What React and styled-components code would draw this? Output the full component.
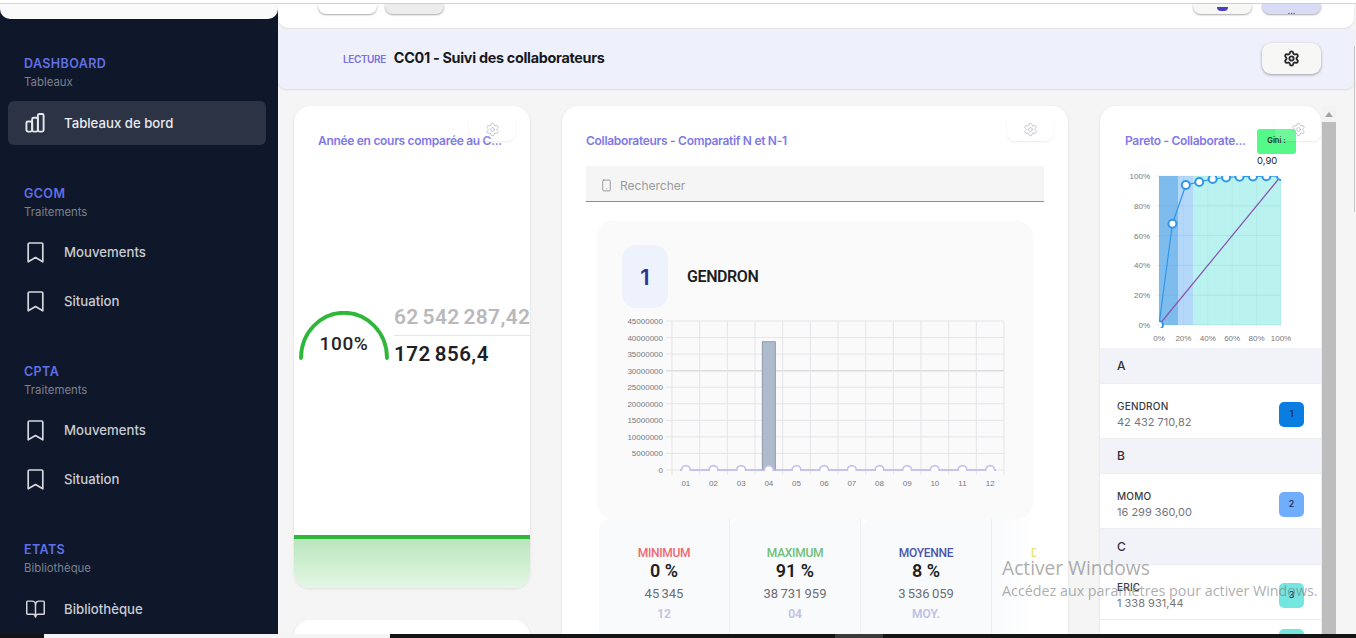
import React from 'react';
import styled, { createGlobalStyle } from 'styled-components';
import { Settings, BookOpen, Smartphone } from 'lucide-react';

const GlobalStyle = createGlobalStyle`
  html, body {
    margin: 0;
    padding: 0;
    height: 100%;
    overflow: hidden;
    background: #f5f5f6;
    font-family: "Inter", "Liberation Sans", sans-serif;
  }
  * { box-sizing: border-box; }
`;

const Screen = styled.div`
  position: relative;
  display: flex;
  flex-direction: column;
  width: 1356px;
  height: 638px;
  overflow: hidden;
  background: #f5f5f6;
`;

const TopEdge = styled.div`
  flex: none;
  height: 4px;
  background: #fff;
  border-bottom: 1px solid #d4d4d6;
`;

const Body = styled.div`
  flex: 1;
  min-height: 0;
  display: flex;
`;

const Sidebar = styled.aside`
  flex: none;
  width: 278px;
  background: #0f172a;
  overflow: hidden;
`;

const SidebarLogo = styled.div`
  height: 15px;
  background: #fafafa;
  border-radius: 0 0 10px 10px;
  margin-bottom: 37px;
`;

const MenuGroup = styled.div`
  margin-bottom: ${(p) => p.$gap}px;
`;

const GroupTitle = styled.div`
  padding-left: 24px;
  color: #6170e6;
  font-size: 12.5px;
  font-weight: 600;
  letter-spacing: 0.4px;
  line-height: 16px;
`;

const GroupSub = styled.div`
  padding-left: 24px;
  margin-top: 3px;
  color: #7b818e;
  font-size: 11.4px;
  line-height: 14px;
  margin-bottom: ${(p) => p.$after}px;
`;

const MenuItem = styled.div`
  display: flex;
  align-items: center;
  gap: 18px;
  height: 44px;
  margin: 0 12px 5px 8px;
  padding-left: 17px;
  border-radius: 6px;
  background: ${(p) => (p.$active ? '#2c3345' : 'transparent')};
  color: ${(p) => (p.$active ? '#e9eaee' : '#c9ccd2')};
  font-size: 13.2px;
  font-weight: 500;
`;

const MenuIcon = styled.span`
  display: flex;
  width: 21px;
  justify-content: center;
  color: #d5d7dc;
`;

const Main = styled.main`
  flex: 1;
  min-width: 0;
  display: flex;
  flex-direction: column;
`;

const TopBar = styled.div`
  flex: none;
  display: flex;
  justify-content: space-between;
  height: 24px;
  padding: 0 33px 0 40px;
  background: #fff;
  border-radius: 0 0 10px 10px;
  box-shadow: 0 1px 2px rgba(0, 0, 0, 0.1);
  margin-right: 2px;
`;

const ButtonRow = styled.div`
  display: flex;
  gap: ${(p) => p.$gap}px;
`;

const ClippedButton = styled.div`
  display: flex;
  align-items: flex-end;
  justify-content: center;
  width: 59px;
  height: 10px;
  background: ${(p) => p.$bg};
  border-radius: 0 0 8px 8px;
  box-shadow: 0 1px 2px rgba(0, 0, 0, 0.35);
  overflow: hidden;
  color: #4b3fc4;
  font-size: 9px;
  line-height: 7px;
`;

const Dot = styled.span`
  display: block;
  width: 11px;
  height: 4px;
  margin-bottom: 3px;
  border-radius: 0 0 6px 6px;
  background: #4b3fc4;
`;

const TitleBand = styled.div`
  flex: none;
  display: flex;
  align-items: center;
  justify-content: space-between;
  height: 60px;
  margin-top: 1px;
  margin-right: 2px;
  padding: 0 33px 2px 65px;
  background: #eef1fc;
  border-radius: 0 0 8px 8px;
  box-shadow: 0 1px 2px rgba(0, 0, 0, 0.1);
`;

const TitleGroup = styled.div`
  display: flex;
  align-items: baseline;
  gap: 8px;
  margin-bottom: 2px;
`;

const TitleTag = styled.span`
  color: #7c6fe0;
  font-size: 10px;
  font-weight: 600;
  letter-spacing: -0.4px;
`;

const PageTitle = styled.h1`
  margin: 0;
  color: #17181c;
  font-size: 14.4px;
  font-weight: 700;
  letter-spacing: -0.3px;
`;

const GearButton = styled.div`
  display: flex;
  align-items: center;
  justify-content: center;
  width: 59px;
  height: 31px;
  background: #f7f7f5;
  border-radius: 9px;
  box-shadow: 0 1px 3px rgba(0, 0, 0, 0.35);
  color: #26272b;
`;

const Content = styled.div`
  flex: 1;
  min-height: 0;
  display: flex;
  align-items: flex-start;
  padding: 17px 0 0 16px;
  overflow: hidden;
`;

const Column = styled.div`
  flex: none;
  display: flex;
  flex-direction: column;
  gap: 32px;
  width: ${(p) => p.$width}px;
  margin-right: ${(p) => p.$after}px;
`;

const Card = styled.section`
  position: relative;
  flex: none;
  height: ${(p) => p.$height}px;
  background: #fff;
  border-radius: 16px;
  box-shadow: 0 1px 3px rgba(0, 0, 0, 0.1);
  overflow: hidden;
`;

const CardTitle = styled.h2`
  margin: 0;
  padding: 27px 24px 0 ${(p) => p.$left || 24}px;
  color: #8179ea;
  font-size: 12px;
  font-weight: 600;
  line-height: 16px;
  letter-spacing: -0.3px;
  white-space: nowrap;
`;

const CardGear = styled.div`
  position: absolute;
  top: 12px;
  right: ${(p) => p.$right}px;
  display: flex;
  align-items: center;
  justify-content: center;
  width: 46px;
  height: 23px;
  padding-bottom: 1px;
  background: rgba(255, 255, 255, 0.14);
  border-radius: 0 0 8px 8px;
  box-shadow: 0 1px 2px rgba(0, 0, 0, 0.08);
  color: #b9bbcc;
`;

const KpiBody = styled.div`
  display: flex;
  align-items: flex-start;
  padding: 149px 0 0 4px;
`;

const Gauge = styled.div`
  position: relative;
  flex: none;
  width: 92px;
  height: 52px;
  margin: 13px 4px 0 0;
`;

const GaugeValue = styled.span`
  position: absolute;
  left: 0;
  right: 0;
  top: 21px;
  text-align: center;
  color: #24252a;
  font-family: "Roboto", "Liberation Sans", sans-serif;
  font-size: 19px;
  font-weight: 500;
  letter-spacing: 0.6px;
`;

const KpiValues = styled.div`
  flex: 1;
  min-width: 0;
  white-space: nowrap;
  font-family: "Roboto", "Liberation Sans", sans-serif;
`;

const KpiTop = styled.div`
  height: 38px;
  padding-top: 5px;
  color: #b9b9bb;
  font-size: 21px;
  font-weight: 600;
  line-height: 28px;
  letter-spacing: 0.3px;
  word-spacing: -1.5px;
  border-bottom: 1px solid #e6e6e8;
`;

const KpiBottom = styled.div`
  padding-top: 4px;
  color: #1e1f24;
  font-size: 20.5px;
  font-weight: 600;
  line-height: 28px;
  letter-spacing: 0.5px;
  word-spacing: -1.5px;
`;

const KpiFooter = styled.div`
  position: absolute;
  left: 0;
  right: 0;
  bottom: 0;
  height: 53px;
  border-top: 4px solid #2fb73a;
  background: linear-gradient(#b9e6bc, #e4f7e4);
`;

const SearchBox = styled.div`
  display: flex;
  align-items: center;
  gap: 7px;
  height: 36px;
  margin: 17px 24px 0;
  padding: 4px 0 0 14px;
  background: #f5f5f5;
  border-bottom: 1px solid #8d8d8f;
  color: #9a9a9c;
  font-size: 12px;
`;

const PersonCard = styled.div`
  width: 436px;
  height: 298px;
  margin: 19px 0 0 35px;
  padding: 24px 25px 0;
  background: #fafafb;
  border-radius: 18px;
  box-shadow: 0 0 2px rgba(0, 0, 0, 0.05);
`;

const PersonHead = styled.div`
  display: flex;
  align-items: center;
  gap: 19px;
  margin-bottom: 7px;
`;

const RankTile = styled.div`
  display: flex;
  align-items: center;
  justify-content: center;
  width: 46px;
  height: 63px;
  background: #eef2fd;
  border-radius: 14px;
  color: #2f3396;
  font-size: 22px;
  font-weight: 600;
`;

const PersonName = styled.div`
  color: #1d1e22;
  font-size: 16px;
  font-weight: 600;
  letter-spacing: -0.4px;
  font-family: "Roboto", "Liberation Sans", sans-serif;
`;

const StatsRow = styled.div`
  display: flex;
  margin: 0 0 0 37px;
`;

const Stat = styled.div`
  flex: none;
  width: 131px;
  height: 118px;
  padding-top: 27px;
  text-align: center;
  background: #f9fafc;
  border-radius: 10px 0 0 0;
  border-right: 1px solid #eeeff2;
  font-family: "Roboto", "Liberation Sans", sans-serif;
`;

const ClippedStat = styled.div`
  flex: none;
  width: 44px;
  height: 118px;
  padding: 27px 0 0 39px;
  overflow: hidden;
  background: linear-gradient(90deg, #f9fafc, #fff);
  font-family: "Roboto", "Liberation Sans", sans-serif;
`;

const StatLabel = styled.div`
  color: ${(p) => p.$color};
  font-size: 12px;
  font-weight: 500;
  line-height: 14px;
  letter-spacing: -0.3px;
`;

const StatPercent = styled.div`
  color: #1e1f24;
  font-size: 18px;
  font-weight: 600;
  line-height: 22px;
`;

const StatAmount = styled.div`
  margin-top: 3px;
  color: #6d6e72;
  font-size: 13px;
  line-height: 18px;
  word-spacing: -1px;
`;

const StatPeriod = styled.div`
  margin-top: 2px;
  color: #c0c1e4;
  font-size: 12px;
  font-weight: 600;
  line-height: 18px;
`;

const GiniBadge = styled.div`
  position: absolute;
  top: 23px;
  left: 157px;
  display: flex;
  align-items: center;
  justify-content: center;
  width: 39px;
  height: 25px;
  padding-bottom: 2px;
  background: #55f98a;
  border-radius: 3px;
  color: #17321f;
  font-size: 7.5px;
  font-weight: 600;
`;

const GiniValue = styled.div`
  position: absolute;
  top: 49px;
  left: 157px;
  color: #26272b;
  font-size: 9.5px;
`;

const ParetoChart = styled.div`
  height: 199px;
  padding-top: 21px;
`;

const LetterRow = styled.div`
  display: flex;
  align-items: center;
  height: 34.5px;
  padding-left: 17px;
  background: #f1f3f9;
  color: #303138;
  font-size: 12px;
  font-weight: 500;
`;

const PersonRow = styled.div`
  display: flex;
  align-items: center;
  justify-content: space-between;
  height: 56px;
  padding: 7px 17px 0;
  border-bottom: 1px solid #eceef2;
  border-top: 1px solid #eceef2;
`;

const TrailingRow = styled.div`
  display: flex;
  justify-content: flex-end;
  padding: 9px 17px 0;
`;

const RowName = styled.div`
  color: #3a3b44;
  font-size: 10px;
  font-weight: 500;
  line-height: 16px;
  letter-spacing: 0.2px;
`;

const RowAmount = styled.div`
  color: #75767c;
  font-size: 11px;
  line-height: 17px;
`;

const RankChip = styled.div`
  display: flex;
  align-items: center;
  justify-content: center;
  width: 25px;
  height: 25px;
  padding-bottom: 2px;
  border-radius: 5px;
  background: ${(p) => p.$bg};
  color: #1e2a4a;
  font-size: 9px;
  font-weight: 500;
`;

const PanelScrollbar = styled.div`
  position: absolute;
  top: 105px;
  left: 1322px;
  width: 14px;
  height: 529px;
  padding-top: 17px;
  background: #f3f3f4;
`;

const ScrollArrow = styled.div`
  position: absolute;
  top: 7px;
  left: 3px;
  width: 0;
  height: 0;
  border-left: 4px solid transparent;
  border-right: 4px solid transparent;
  border-bottom: 5px solid #a3a3a3;
`;

const ScrollThumb = styled.div`
  height: 100%;
  background: #bdbdbd;
`;

const PageScrollbar = styled.div`
  position: absolute;
  top: 46px;
  right: 1px;
  width: 1px;
  height: 166px;
  background: #c8c8c8;
`;

const Watermark = styled.div`
  position: absolute;
  left: 1002px;
  top: 555px;
  color: rgba(120, 120, 120, 0.62);
  font-family: "Open Sans", "Liberation Sans", sans-serif;
  white-space: nowrap;
  pointer-events: none;
`;

const WatermarkTitle = styled.div`
  font-size: 19.2px;
  line-height: 26px;
`;

const WatermarkText = styled.div`
  font-size: 14.3px;
  line-height: 20px;
`;

const Taskbar = styled.div`
  flex: none;
  display: flex;
  height: 4px;
  background: #141414;
`;

const TaskSegment = styled.div`
  flex: none;
  width: ${(p) => p.$width}px;
  background: ${(p) => p.$bg};
`;

function ColumnsIcon() {
  return (
    <svg width="22" height="22" viewBox="0 0 22 22" fill="none" stroke="#e6e7eb" strokeWidth="2" strokeLinejoin="round">
      <rect x="1.5" y="9.5" width="6" height="10.5" rx="1.6" />
      <rect x="7.5" y="5.5" width="6" height="14.5" rx="1.6" />
      <rect x="13.5" y="1.5" width="6" height="18.5" rx="1.6" />
    </svg>
  );
}

function BookmarkIcon() {
  return (
    <svg width="17" height="21" viewBox="0 0 17 21" fill="none" stroke="currentColor" strokeWidth="1.7" strokeLinejoin="round">
      <path d="M1.2 2.2a1.2 1.2 0 0 1 1.2-1.2h12.2a1.2 1.2 0 0 1 1.2 1.2v17.6l-7.3-4.3-7.3 4.3z" />
    </svg>
  );
}

function GaugeArc() {
  return (
    <svg width="92" height="52" viewBox="0 0 92 52" fill="none">
      <path d="M3 47 A42.75 45 0 0 1 89 47" stroke="#2fb73a" strokeWidth="3.8" strokeLinecap="round" />
    </svg>
  );
}

const months = ['01', '02', '03', '04', '05', '06', '07', '08', '09', '10', '11', '12'];
const yTicks = [45000000, 40000000, 35000000, 30000000, 25000000, 20000000, 15000000, 10000000, 5000000, 0];

function MonthlyChart() {
  const left = 50;
  const right = 382;
  const top = 6;
  const bottom = 155;
  const step = (right - left) / 12;
  const rowH = (bottom - top) / 9;
  const barTop = bottom - ((bottom - top) * 38731959) / 45000000;
  return (
    <svg width="394" height="175" viewBox="0 0 394 175" fontFamily="Liberation Sans, sans-serif">
      <defs>
        <clipPath id="monthly-plot">
          <rect x="0" y="0" width="394" height={bottom + 1} />
        </clipPath>
      </defs>
      {yTicks.map((tick, i) => (
        <g key={tick}>
          <line x1={left - 6} x2={right} y1={top + i * rowH} y2={top + i * rowH} stroke={tick === 30000000 ? '#dcdcde' : '#e5e5e8'} strokeWidth={tick === 30000000 ? 1.5 : 1} />
          <text x={left - 9} y={top + i * rowH + 3} fontSize="8" fill="#77787c" textAnchor="end">{tick}</text>
        </g>
      ))}
      {months.map((m, i) => (
        <g key={m}>
          <line x1={left + i * step} x2={left + i * step} y1={top} y2={bottom + 5} stroke="#e5e5e8" />
          <text x={left + (i + 0.5) * step} y={bottom + 16} fontSize="8" fill="#77787c" textAnchor="middle">{m}</text>
        </g>
      ))}
      <line x1={right} x2={right} y1={top} y2={bottom + 5} stroke="#e5e5e8" />
      <rect x={left + 3.5 * step - 6.5} y={barTop} width="13" height={bottom - barTop} fill="#aebbcc" stroke="#8f9aa9" />
      <g clipPath="url(#monthly-plot)">
        <line x1={left + 8} x2={left + 11.5 * step + 6} y1={bottom} y2={bottom} stroke="#b9b4ea" strokeWidth="1.4" />
        {months.map((m, i) => (
          <circle key={m} cx={left + (i + 0.5) * step} cy={bottom} r="4.4" fill="#fff" stroke="#c4c0ee" strokeWidth="1.6" />
        ))}
      </g>
    </svg>
  );
}

function Pareto() {
  const x0 = 59;
  const x1 = 181;
  const y0 = 6;
  const y1 = 155;
  const w = x1 - x0;
  const h = y1 - y0;
  const px = (v) => x0 + (w * v) / 100;
  const py = (v) => y1 - (h * v) / 100;
  const points = [[0, 0], [11, 68], [22, 94], [33, 96], [44, 98], [55, 99], [66, 99.5], [77, 99.7], [88, 99.9], [100, 100]];
  return (
    <svg width="221" height="175" viewBox="0 0 221 175" fontFamily="Liberation Sans, sans-serif">
      <defs>
        <clipPath id="pareto-plot">
          <rect x={x0} y={y0} width={w} height={h + 3} />
        </clipPath>
      </defs>
      <rect x={x0} y={y0} width={19} height={h} fill="#7fbcee" />
      <rect x={x0 + 19} y={y0} width={15} height={h} fill="#b4d8fa" />
      <rect x={x0 + 34} y={y0} width={w - 34} height={h} fill="#b9f2ee" />
      {[0, 20, 40, 60, 80, 100].map((v) => (
        <g key={v}>
          <line x1={x0 - 3} x2={x1} y1={py(v)} y2={py(v)} stroke="rgba(90,120,130,0.1)" />
          <line x1={px(v)} x2={px(v)} y1={y0} y2={y1 + 3} stroke="rgba(90,120,130,0.06)" />
          <text x={x0 - 9} y={py(v) + 3} fontSize="8" fill="#77787c" textAnchor="end">{v}%</text>
          <text x={px(v)} y={y1 + 16} fontSize="8" fill="#77787c" textAnchor="middle">{v}%</text>
        </g>
      ))}
      <g clipPath="url(#pareto-plot)">
        <line x1={px(0)} y1={py(0)} x2={px(100)} y2={py(100)} stroke="#8a4fb0" strokeWidth="1.2" />
        <polyline points={points.map(([a, b]) => `${px(a)},${py(b)}`).join(' ')} fill="none" stroke="#2f96e8" strokeWidth="1.2" />
        {points.map(([a, b]) => (
          <circle key={a} cx={px(a)} cy={py(b)} r="4" fill="#fff" stroke="#2f96e8" strokeWidth="2" />
        ))}
      </g>
    </svg>
  );
}

const menu = [
  { title: 'DASHBOARD', sub: 'Tableaux', after: 12, gap: 41, items: [{ label: 'Tableaux de bord', icon: <ColumnsIcon />, active: true }] },
  { title: 'GCOM', sub: 'Traitements', after: 11, gap: 41, items: [{ label: 'Mouvements', icon: <BookmarkIcon /> }, { label: 'Situation', icon: <BookmarkIcon /> }] },
  { title: 'CPTA', sub: 'Traitements', after: 11, gap: 41, items: [{ label: 'Mouvements', icon: <BookmarkIcon /> }, { label: 'Situation', icon: <BookmarkIcon /> }] },
  { title: 'ETATS', sub: 'Bibliothèque', after: 12, gap: 0, items: [{ label: 'Bibliothèque', icon: <BookOpen size={22} strokeWidth={1.7} /> }] },
];

const stats = [
  { label: 'MINIMUM', color: '#ec6a72', percent: '0 %', amount: '45 345', period: '12' },
  { label: 'MAXIMUM', color: '#70bf78', percent: '91 %', amount: '38 731 959', period: '04' },
  { label: 'MOYENNE', color: '#4a55b0', percent: '8 %', amount: '3 536 059', period: 'MOY.' },
];

const people = [
  { letter: 'A', name: 'GENDRON', amount: '42 432 710,82', rank: 1, color: '#0a7ee0' },
  { letter: 'B', name: 'MOMO', amount: '16 299 360,00', rank: 2, color: '#6eaefc' },
  { letter: 'C', name: 'ERIC', amount: '1 338 931,44', rank: 3, color: '#74e6e0' },
];

export default function App() {
  return (
    <Screen>
      <GlobalStyle />
      <TopEdge />
      <Body>
        <Sidebar>
          <SidebarLogo />
          {menu.map((group) => (
            <MenuGroup key={group.title} $gap={group.gap}>
              <GroupTitle>{group.title}</GroupTitle>
              <GroupSub $after={group.after}>{group.sub}</GroupSub>
              {group.items.map((item) => (
                <MenuItem key={item.label} $active={item.active}>
                  <MenuIcon>{item.icon}</MenuIcon>
                  {item.label}
                </MenuItem>
              ))}
            </MenuGroup>
          ))}
        </Sidebar>
        <Main>
          <TopBar>
            <ButtonRow $gap={8}>
              <ClippedButton $bg="#fff" />
              <ClippedButton $bg="#ececec" />
            </ButtonRow>
            <ButtonRow $gap={10}>
              <ClippedButton $bg="#f7f7f5"><Dot /></ClippedButton>
              <ClippedButton $bg="#d9dcf6">...</ClippedButton>
            </ButtonRow>
          </TopBar>
          <TitleBand>
            <TitleGroup>
              <TitleTag>LECTURE</TitleTag>
              <PageTitle>CC01 - Suivi des collaborateurs</PageTitle>
            </TitleGroup>
            <GearButton><Settings size={17} strokeWidth={2.6} /></GearButton>
          </TitleBand>
          <Content>
            <Column $width={236} $after={32}>
              <Card $height={482}>
                <CardTitle>Année en cours comparée au C...</CardTitle>
                <CardGear $right={15}><Settings size={15} strokeWidth={1.4} /></CardGear>
                <KpiBody>
                  <Gauge>
                    <GaugeArc />
                    <GaugeValue>100%</GaugeValue>
                  </Gauge>
                  <KpiValues>
                    <KpiTop>62 542 287,42</KpiTop>
                    <KpiBottom>172 856,4</KpiBottom>
                  </KpiValues>
                </KpiBody>
                <KpiFooter />
              </Card>
              <Card $height={40} />
            </Column>
            <Column $width={506} $after={32}>
              <Card $height={560}>
                <CardTitle>Collaborateurs - Comparatif N et N-1</CardTitle>
                <CardGear $right={15}><Settings size={15} strokeWidth={1.4} /></CardGear>
                <SearchBox>
                  <Smartphone size={13} strokeWidth={1.3} color="#77787c" />
                  Rechercher
                </SearchBox>
                <PersonCard>
                  <PersonHead>
                    <RankTile>1</RankTile>
                    <PersonName>GENDRON</PersonName>
                  </PersonHead>
                  <MonthlyChart />
                </PersonCard>
                <StatsRow>
                  {stats.map((s) => (
                    <Stat key={s.label}>
                      <StatLabel $color={s.color}>{s.label}</StatLabel>
                      <StatPercent>{s.percent}</StatPercent>
                      <StatAmount>{s.amount}</StatAmount>
                      <StatPeriod>{s.period}</StatPeriod>
                    </Stat>
                  ))}
                  <ClippedStat>
                    <StatLabel $color="#e8e67a">D</StatLabel>
                  </ClippedStat>
                </StatsRow>
              </Card>
            </Column>
            <Column $width={221} $after={0}>
              <Card $height={560}>
                <CardTitle $left={25}>Pareto - Collaborate...</CardTitle>
                <GiniBadge>Gini :</GiniBadge>
                <GiniValue>0,90</GiniValue>
                <CardGear $right={0}><Settings size={15} strokeWidth={1.4} /></CardGear>
                <ParetoChart><Pareto /></ParetoChart>
                {people.map((p) => (
                  <React.Fragment key={p.letter}>
                    <LetterRow>{p.letter}</LetterRow>
                    <PersonRow>
                      <div>
                        <RowName>{p.name}</RowName>
                        <RowAmount>{p.amount}</RowAmount>
                      </div>
                      <RankChip $bg={p.color}>{p.rank}</RankChip>
                    </PersonRow>
                  </React.Fragment>
                ))}
                <TrailingRow><RankChip $bg="#74e6e0" /></TrailingRow>
              </Card>
            </Column>
          </Content>
        </Main>
      </Body>
      <Taskbar>
        <TaskSegment $width={44} $bg="#141414" />
        <TaskSegment $width={346} $bg="#f4f4f4" />
        <TaskSegment $width={445} $bg="#141414" />
        <TaskSegment $width={48} $bg="#3a3a3a" />
      </Taskbar>
      <PanelScrollbar>
        <ScrollArrow />
        <ScrollThumb />
      </PanelScrollbar>
      <PageScrollbar />
      <Watermark>
        <WatermarkTitle>Activer Windows</WatermarkTitle>
        <WatermarkText>Accédez aux paramètres pour activer Windows.</WatermarkText>
      </Watermark>
    </Screen>
  );
}
